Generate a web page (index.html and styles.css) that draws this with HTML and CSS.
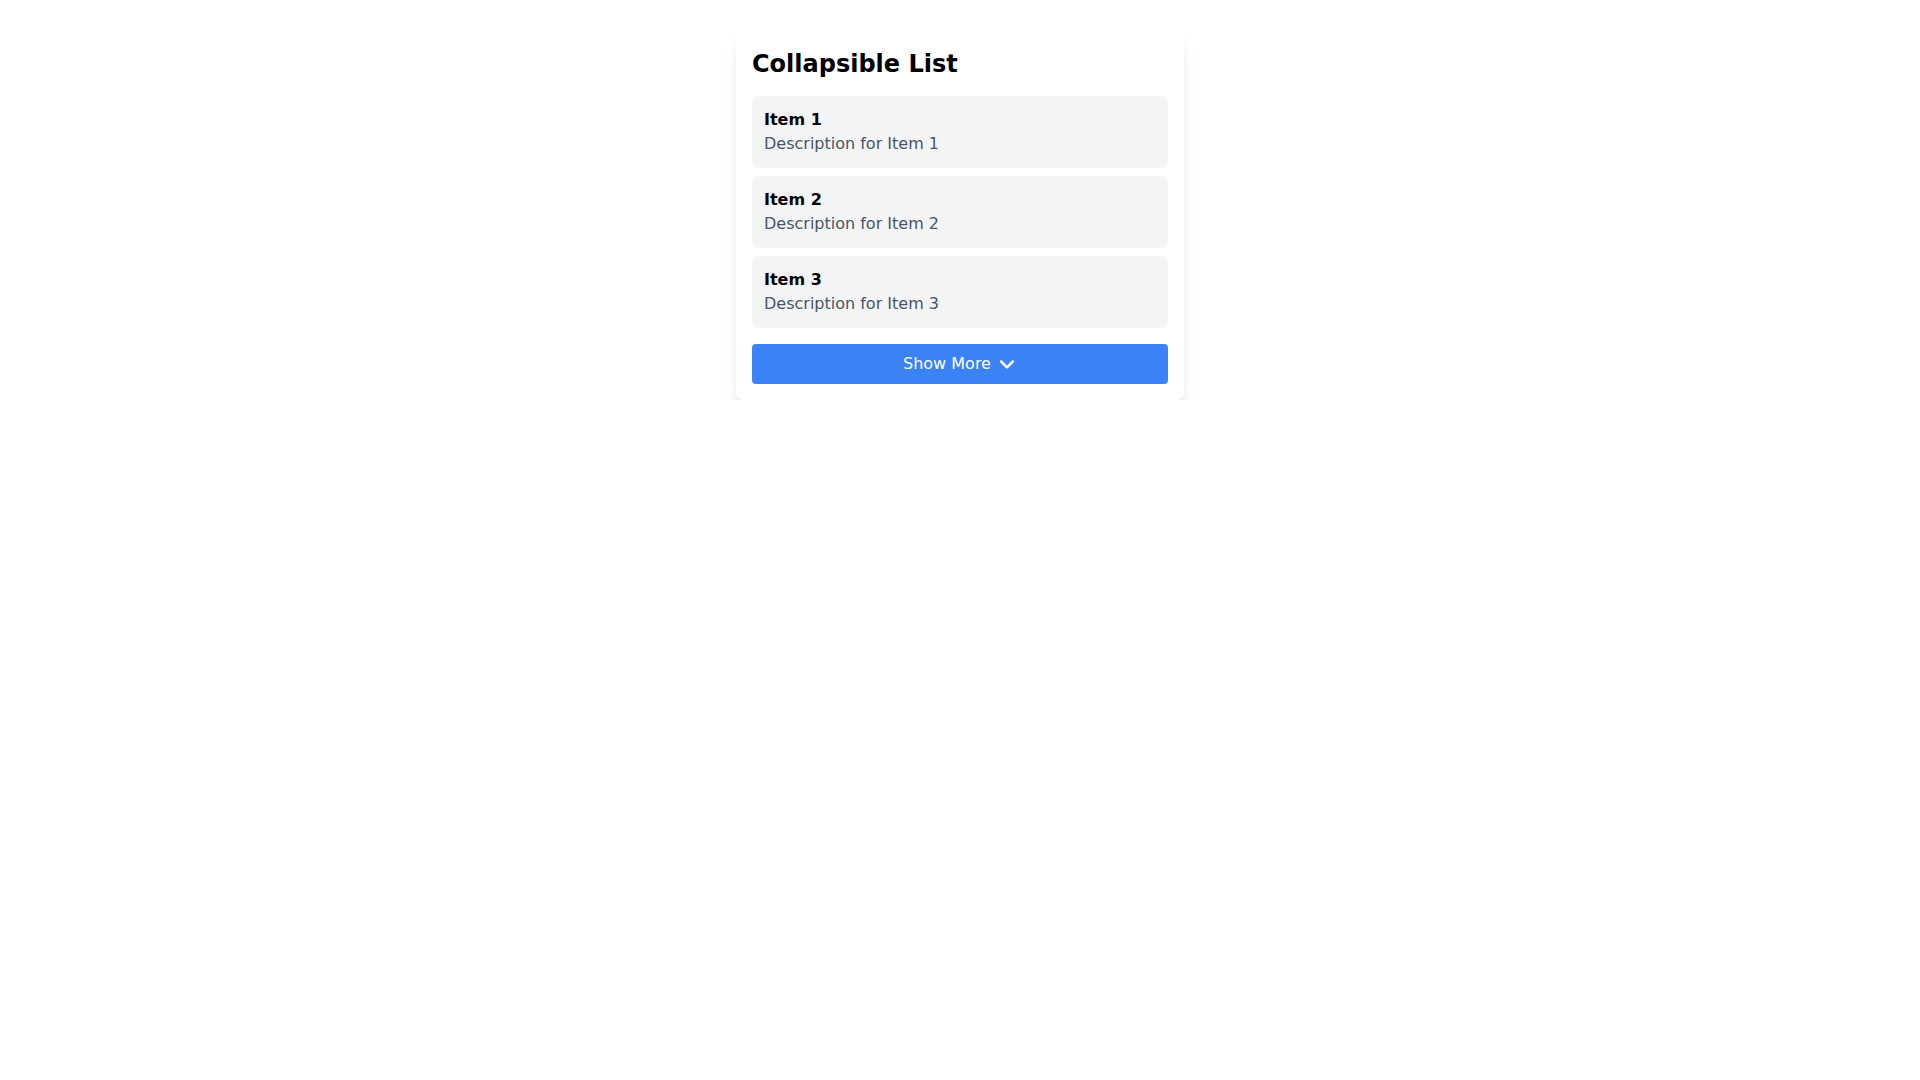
FILE: index.html
```html
<!DOCTYPE html>
<html lang="en">
<head>
<meta charset="utf-8">
<title>Collapsible List</title>
<link rel="stylesheet" href="styles.css">
</head>
<body>
<div class="page">
  <div class="card">
    <h2 class="title">Collapsible List</h2>
    <ul class="list">
      <li class="item">
        <div class="item-title">Item 1</div>
        <div class="item-desc">Description for Item 1</div>
      </li>
      <li class="item">
        <div class="item-title">Item 2</div>
        <div class="item-desc">Description for Item 2</div>
      </li>
      <li class="item">
        <div class="item-title">Item 3</div>
        <div class="item-desc">Description for Item 3</div>
      </li>
    </ul>
    <button class="btn" type="button">
      <span>Show More</span>
      <svg class="chev" viewBox="0 0 24 24" width="20" height="20" fill="none" stroke="currentColor" stroke-width="3" stroke-linecap="round" stroke-linejoin="round"><path d="M19 9l-7 7-7-7"/></svg>
    </button>
  </div>
</div>
</body>
</html>
```

FILE: styles.css
```css
* { box-sizing: border-box; }
html, body {
  margin: 0;
  padding: 0;
  background: #ffffff;
  font-family: "DejaVu Sans", sans-serif;
}
.page {
  display: flex;
  justify-content: center;
  padding-top: 32px;
}
.card {
  width: 448px;
  background: #ffffff;
  border-radius: 8px;
  padding: 16px;
  box-shadow: 0 10px 15px -3px rgba(0,0,0,0.1), 0 4px 6px -4px rgba(0,0,0,0.1);
}
.title {
  margin: 0 0 16px 0;
  font-size: 24px;
  line-height: 32px;
  font-weight: 700;
  color: #000;
}
.list {
  list-style: none;
  margin: 0;
  padding: 0;
  display: flex;
  flex-direction: column;
  gap: 8px;
}
.item {
  background: #f3f4f6;
  border-radius: 6px;
  padding: 12px;
}
.item-title {
  font-size: 16px;
  line-height: 24px;
  font-weight: 700;
  color: #000;
}
.item-desc {
  font-size: 16px;
  line-height: 24px;
  color: #4b5563;
}
.btn {
  margin-top: 16px;
  width: 100%;
  height: 40px;
  border: none;
  border-radius: 4px;
  background: #3b82f6;
  color: #ffffff;
  font-family: "DejaVu Sans", sans-serif;
  font-size: 16px;
  line-height: 24px;
  display: flex;
  align-items: center;
  justify-content: center;
  gap: 6px;
  padding: 8px 16px;
}
.chev { display: block; }
```
